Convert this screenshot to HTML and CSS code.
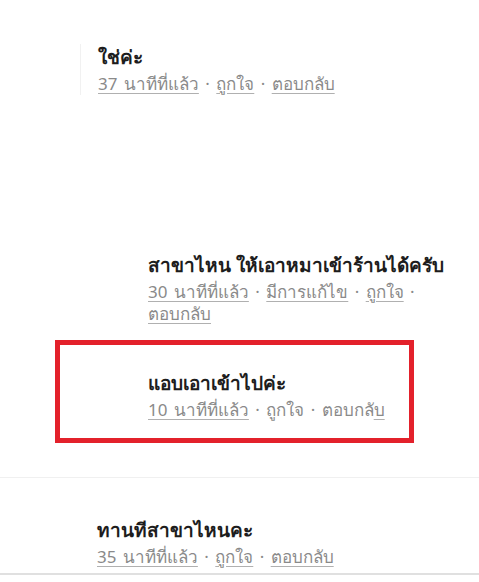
FILE: index.html
```html
<!DOCTYPE html>
<html lang="th">
  <head>
    <meta charset="utf-8">
    <title>ความคิดเห็น</title>
    <link rel="stylesheet" href="styles.css">
  </head>
  <body>
    <div class="thread">

      <div class="comment first">
        <p class="text">ใช่ค่ะ</p>
        <p class="meta"><a>37 นาทีที่แล้ว</a> · <a>ถูกใจ</a> · <a>ตอบกลับ</a></p>
      </div>

      <div class="comment reply second">
        <p class="text">สาขาไหน ให้เอาหมาเข้าร้านได้ครับ</p>
        <p class="meta"><a>30 นาทีที่แล้ว</a> · <a>มีการแก้ไข</a> · <a>ถูกใจ</a> ·<br><a>ตอบกลับ</a></p>
      </div>

      <div class="highlight">
        <div class="comment reply">
          <p class="text">แอบเอาเข้าไปค่ะ</p>
          <p class="meta"><a>10 นาทีที่แล้ว</a> · <span>ถูกใจ</span> · <span>ตอบกล<a>ับ</a></span></p>
        </div>
      </div>

      <hr class="divider">

      <div class="comment last">
        <p class="text">ทานทีสาขาไหนคะ</p>
        <p class="meta"><a>35 นาทีที่แล้ว</a> · <a>ถูกใจ</a> · <a>ตอบกลับ</a></p>
      </div>

      <hr class="bottom">
    </div>
  </body>
</html>
```

FILE: styles.css
```css
body {
  margin: 0;
  background-color: #ffffff;
  font-family: "Noto Sans", "Liberation Sans", sans-serif;
}

.thread {
  width: 479px;
  height: 582px;
  overflow: hidden;
}

.comment {
  padding-left: 97px;
}

.comment.reply {
  padding-left: 148px;
}

.text {
  margin: 0;
  font-size: 19px;
  font-weight: bold;
  line-height: 26px;
  color: #1d1d1d;
  white-space: nowrap;
}

.meta {
  margin: 3px 0 0;
  font-size: 17px;
  line-height: 22px;
  color: #8a8a8a;
  white-space: nowrap;
  word-spacing: 2px;
}

.meta a {
  text-decoration: underline;
  text-decoration-color: #b0b0b0;
  text-underline-offset: 3px;
}

.first {
  margin-top: 44px;
  margin-left: 80px;
  padding-left: 17px;
  border-left: 1px solid #f1f1f1;
}

.second {
  margin-top: 157px;
}

.highlight {
  margin: 15px 65px 0 55px;
  border: 5px solid #e3212b;
  height: 103px;
  box-sizing: border-box;
  padding-top: 25px;
}

.highlight .comment.reply {
  padding-left: 88px;
}

.divider {
  margin: 34px 0 0;
  border: 0;
  border-top: 1px solid #f0f0f0;
}

.last {
  margin-top: 39px;
}

.bottom {
  margin: 5px 0 0;
  border: 0;
  border-top: 2px solid #e0e0e0;
}
```
